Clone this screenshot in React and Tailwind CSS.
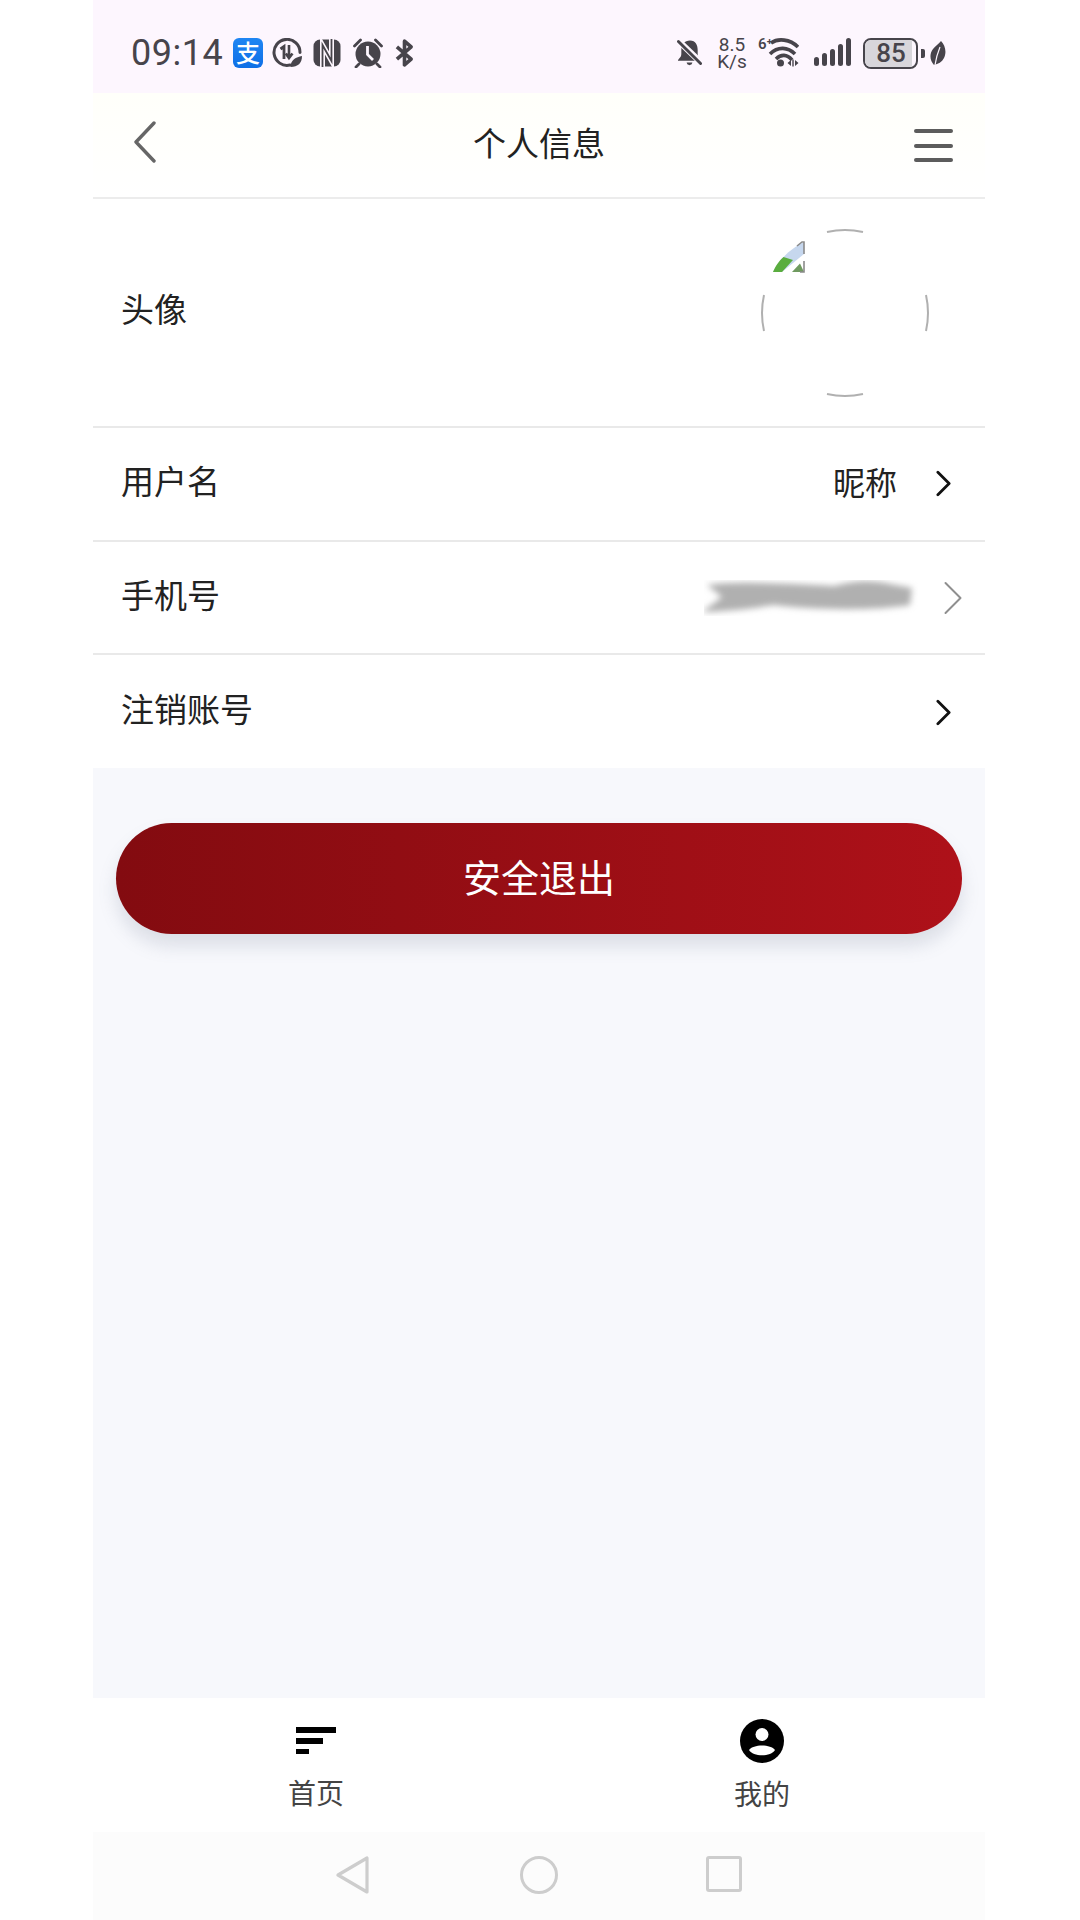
import React from "react";

const cjk = { fontFamily: '"Noto Sans CJK SC", "Noto Sans", sans-serif' };

const Chevron = ({ className, stroke = "#111", width = 3 }) => (
    <svg viewBox="0 0 16 28" className={className} fill="none">
        <path d="M2 2 L14 14 L2 26" stroke={stroke} strokeWidth={width} strokeLinecap="round" strokeLinejoin="round" />
    </svg>
);

const Row = ({ label, children, className }) => (
    <div className={`flex items-center justify-between bg-white pl-7 ${className}`}>
        <span className="pb-1 text-[33px] leading-none text-[#222]">{label}</span>
        {children}
    </div>
);

const StatusLeft = () => (
    <div className="flex items-center text-[#47444b]">
        <span className="w-[102px] text-[36px] leading-none tracking-[0.5px] font-['Roboto',sans-serif]">09:14</span>
        <div className="flex h-[30px] w-[30px] flex-col items-center justify-center rounded-[6px] bg-gradient-to-b from-[#1f86f3] to-[#0f6fe6] pb-[2px] text-[24px] leading-none font-medium text-white">
            支
        </div>
        <svg viewBox="0 0 30 30" className="ml-[9px] h-[30px] w-[30px]" fill="none" stroke="currentColor">
            <path d="M18 27 A13 13 0 1 1 28 14.5" strokeWidth="3" strokeLinecap="round" />
            <path d="M8.5 11 L12 8.5 V21" strokeWidth="2.8" />
            <path d="M17 7 V18 M13.8 15.5 L17 20 L20.5 15.5" strokeWidth="2.6" />
            <path d="M18.5 29 C18.5 22 24 19 30 18 C30 25 26 29 18.5 29 Z" fill="currentColor" stroke="none" />
        </svg>
        <svg viewBox="0 0 28 28" className="ml-[11px] h-[28px] w-[28px]">
            <rect x="0.5" y="0.5" width="27" height="27" rx="6.5" fill="currentColor" />
            <path d="M9.5 28 V6 L18.5 22 V0" fill="none" stroke="#fdf6fe" strokeWidth="5" />
            <path d="M9.5 28 V6 L18.5 22 V0" fill="none" stroke="currentColor" strokeWidth="1.8" />
        </svg>
        <svg viewBox="0 0 30 30" className="ml-[12px] h-[30px] w-[30px]" fill="none">
            <circle cx="15" cy="16" r="12.5" fill="currentColor" />
            <path d="M14.5 8 V16.5 L20 22" stroke="#fdf6fe" strokeWidth="2.8" />
            <path d="M1.5 8 L7.5 2 M22.5 2 L28.5 8 M6 26 L3 29 M24 26 L27 29" stroke="currentColor" strokeWidth="2.8" strokeLinecap="round" />
        </svg>
        <svg viewBox="0 0 20 30" className="ml-[12px] h-[30px] w-[19px]" fill="none" stroke="currentColor" strokeWidth="3.8" strokeLinejoin="round">
            <path d="M2 8.5 L17 21.5 L10 27.5 V2.5 L17 8.5 L2 21.5" />
        </svg>
    </div>
);

const StatusRight = () => (
    <div className="flex items-center text-[#47444b]">
        <svg viewBox="0 0 26 28" className="h-[28px] w-[25px]" fill="currentColor">
            <path d="M13.5 1 C19.5 1 21.5 6 21.5 11 V15 C21.5 18 23 20 25 22 H1 C1 20 4.5 19 4.5 15 V10 C4.5 5 8 1 13.5 1 Z" />
            <path d="M10 24 H16 C15.5 27.5 10.5 27.5 10 24 Z" />
            <path d="M0 0 L26 25" stroke="#fdf6fe" strokeWidth="6.5" />
            <path d="M1.5 2 L24.5 25" stroke="currentColor" strokeWidth="3" strokeLinecap="round" />
        </svg>
        <div className="ml-[15px] flex w-[30px] flex-col items-center text-[19px] leading-[17px] whitespace-nowrap font-['Roboto',sans-serif]">
            <span>8.5</span>
            <span>K/s</span>
        </div>
        <div className="relative ml-[11px] h-[32px] w-[41px]">
            <span className="absolute top-[0px] left-0 text-[15px] leading-none font-semibold font-['Roboto',sans-serif]">6⁺</span>
            <svg viewBox="0 0 41 32" className="h-[32px] w-[41px]" fill="none" stroke="currentColor" strokeWidth="3.6">
                <path d="M13 6 C20 1 32 2 40 10" />
                <path d="M12 17 C20 9 30 10 37 17" />
                <path d="M18 22 C23 17 29 17 34 23" />
                <circle cx="22.5" cy="26" r="3.5" fill="currentColor" stroke="none" />
                <path d="M33 23 L29.5 26 L33 29 Z M37 23 L40.5 26 L37 29 Z" fill="currentColor" stroke="none" />
                <path d="M35 22.5 V29.5" strokeWidth="1.4" />
            </svg>
        </div>
        <svg viewBox="0 0 37 30" className="ml-[15px] h-[30px] w-[37px]" fill="currentColor">
            <rect x="0" y="19" width="5" height="9" rx="2.5" />
            <rect x="8" y="15" width="5" height="13" rx="2.5" />
            <rect x="16" y="11" width="5" height="17" rx="2.5" />
            <rect x="24" y="6" width="5" height="22" rx="2.5" />
            <rect x="32" y="0" width="5" height="28" rx="2.5" />
        </svg>
        <div className="ml-[12px] flex h-[31px] w-[55px] items-center overflow-hidden rounded-[8px] border-[2.5px] border-[#47444b]">
            <span className="flex h-full w-[47px] items-center justify-center bg-[#d8d6db] pl-[5px] text-[26px] leading-none font-medium font-['Roboto',sans-serif]">85</span>
        </div>
        <div className="ml-[3px] h-[9px] w-[4px] rounded-r-[2px] bg-[#47444b]" />
        <svg viewBox="0 0 16 24" className="ml-[5px] h-[24px] w-[16px]" fill="currentColor">
            <path d="M11 0 C15 4 17 11 14 17 C12 21 8 23 4 24 C0 20 -1 13 3 8 C5 5 9 3 11 0 Z" />
            <path d="M10 6 C8 11 6 17 5 24" stroke="#fdf6fe" strokeWidth="1.2" fill="none" />
        </svg>
    </div>
);

const App = () => {
    return (
        <div className="h-[1920px] w-[1080px] bg-white" style={cjk}>
            <div className="ml-[93px] flex h-[1920px] w-[892px] flex-col bg-[#f7f8fc]">
                {/* status bar */}
                <div className="flex h-[93px] shrink-0 items-center justify-between bg-[#fdf6fe] pt-[13px] pr-[39px] pl-[38px]">
                    <StatusLeft />
                    <StatusRight />
                </div>

                {/* title bar */}
                <div className="flex h-[106px] shrink-0 items-center justify-between border-b-2 border-[#ececec] bg-gradient-to-b from-[#fffffa] to-white pt-[1px] pr-[32px] pl-[41px]">
                    <svg viewBox="0 0 22 42" className="mb-[7px] h-[42px] w-[22px]" fill="none">
                        <path d="M20 2 L2 21 L20 40" stroke="#666" strokeWidth="3.4" strokeLinecap="round" strokeLinejoin="round" />
                    </svg>
                    <span className="ml-[8px] pb-[6px] text-[33px] leading-none text-[#222]">个人信息</span>
                    <div className="flex w-[39px] flex-col gap-[10.5px]">
                        <div className="h-[4px] rounded-full bg-[#5c5c5c]" />
                        <div className="h-[4px] rounded-full bg-[#5c5c5c]" />
                        <div className="h-[4px] rounded-full bg-[#5c5c5c]" />
                    </div>
                </div>

                {/* list */}
                <Row label="头像" className="h-[229px] shrink-0 border-b-2 border-[#e9e9e9] pr-[55px] pb-[4px]">
                    <svg viewBox="0 0 170 170" className="mt-[4px] h-[170px] w-[170px]" fill="none">
                        <g stroke="#b0b0b0" strokeWidth="2">
                            <path d="M67 4 A83 83 0 0 1 103 4" />
                            <path d="M67 166 A83 83 0 0 0 103 166" />
                            <path d="M4 67 A83 83 0 0 0 4 103" />
                            <path d="M166 67 A83 83 0 0 1 166 103" />
                        </g>
                        <g transform="translate(-1 0)">
                            <path d="M14 44 C20 32 30 22 43 15 L45 15 V26 L23 44 Z" fill="#c6d7ee" />
                            <path d="M14 44 C17 37 20 33 24.5 29 L34 32 L23 44 Z" fill="#5aad3f" />
                            <path d="M33 44 L41 35.5 L45 44 Z" fill="#6f9a5f" />
                            <path d="M38 18 L43 14 H45 V26 M45 33 V44 H41" stroke="#8a8a8a" strokeWidth="1.6" />
                        </g>
                    </svg>
                </Row>
                <Row label="用户名" className="h-[114px] shrink-0 border-b-2 border-[#e9e9e9] pr-[34px] pb-[4px]">
                    <div className="flex items-center">
                        <span className="pb-[2px] text-[32px] leading-none text-[#222]">昵称</span>
                        <Chevron className="mt-[3px] ml-[39px] h-[27px] w-[15px]" />
                    </div>
                </Row>
                <Row label="手机号" className="h-[113px] shrink-0 border-b-2 border-[#e9e9e9] pr-[22px] pb-[3px]">
                    <div className="mt-[3px] flex items-center">
                        <svg viewBox="0 0 214 36" className="h-[36px] w-[214px]" fill="none">
                            <defs>
                                <filter id="smear" x="-10%" y="-40%" width="120%" height="180%">
                                    <feGaussianBlur stdDeviation="3" />
                                </filter>
                            </defs>
                            <path d="M3 5 C30 1 70 3 130 6 C150 0 170 0 186 4 L208 8 L206 25 C170 31 110 30 70 25 C50 28 30 31 -2 32 L18 17 Z" fill="#b0b0b0" filter="url(#smear)" />
                        </svg>
                        <Chevron className="ml-[25px] h-[36px] w-[20px]" stroke="#8f8f8f" width={1.6} />
                    </div>
                </Row>
                <Row label="注销账号" className="h-[113px] shrink-0 pr-[34px] pb-[2px]">
                    <Chevron className="mt-[4px] h-[27px] w-[15px]" />
                </Row>

                {/* logout */}
                <div className="flex-1 px-[23px] pt-[55px]">
                    <button className="flex h-[111px] w-full items-center justify-center rounded-full bg-gradient-to-r from-[#830b10] to-[#ae1119] pb-[6px] text-[38px] leading-none text-white shadow-[0_12px_18px_rgba(110,120,145,0.2)]">
                        安全退出
                    </button>
                </div>

                {/* tab bar */}
                <div className="grid h-[134px] shrink-0 grid-cols-2 bg-white">
                    <div className="flex flex-col items-center">
                        <div className="mt-[29px] flex h-[27px] w-[40px] flex-col justify-between">
                            <div className="h-[6px] w-[40px] bg-black" />
                            <div className="h-[6px] w-[27px] bg-black" />
                            <div className="h-[5px] w-[13px] bg-black" />
                        </div>
                        <span className="mt-[24px] text-[28px] leading-none text-[#444]">首页</span>
                    </div>
                    <div className="flex flex-col items-center">
                        <svg viewBox="0 0 44 44" className="mt-[21px] h-[44px] w-[44px]">
                            <circle cx="22" cy="22" r="22" fill="#000" />
                            <circle cx="22" cy="15.5" r="6.5" fill="#fff" />
                            <path d="M9 31 C13 25 31 25 35 31 C31 38 13 38 9 31 Z" fill="#fff" />
                        </svg>
                        <span className="mt-[16px] text-[28px] leading-none text-[#444]">我的</span>
                    </div>
                </div>

                {/* android nav */}
                <div className="flex h-[88px] shrink-0 items-start bg-[#fcfcfc] pt-[24px] pl-[243px]">
                    <svg viewBox="0 0 34 38" className="h-[38px] w-[34px]" fill="none">
                        <path d="M31 2 V36 L2 19 Z" stroke="#cdcdcd" strokeWidth="3.2" strokeLinejoin="round" />
                    </svg>
                    <div className="ml-[150px] h-[38px] w-[38px] rounded-full border-[3px] border-[#cdcdcd]" />
                    <div className="ml-[148px] h-[36px] w-[36px] rounded-[3px] border-[3px] border-[#cdcdcd]" />
                </div>
            </div>
        </div>
    );
};

export default App;
